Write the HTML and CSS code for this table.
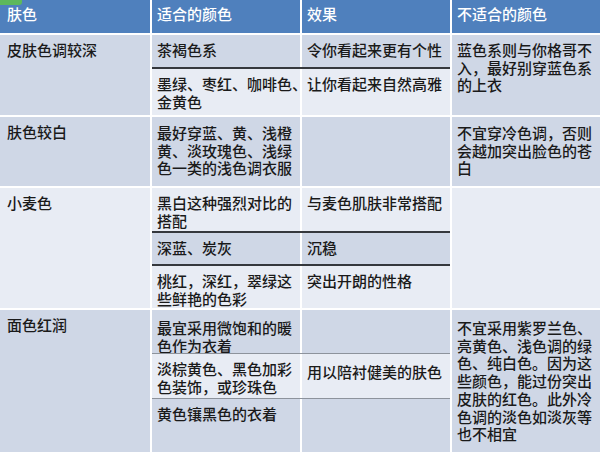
FILE: index.html
```html
<!DOCTYPE html>
<html lang="zh-CN">
<head>
<meta charset="utf-8">
<title>肤色与服装颜色搭配</title>
<link rel="stylesheet" href="styles.css">
</head>
<body>
<div class="page">
  <div class="badge"></div>
  <div class="table">
    <div class="row head">
      <div class="cell">肤色</div>
      <div class="cell">适合的颜色</div>
      <div class="cell">效果</div>
      <div class="cell">不适合的颜色</div>
    </div>

    <div class="row row1">
      <div class="cell c1 dark">皮肤色调较深</div>
      <div class="cell k2 r1 dark">茶褐色系</div>
      <div class="cell k3 r1 dark">令你看起来更有个性</div>
      <div class="line l2 darkline"></div>
      <div class="cell k2 r3 light">墨绿、枣红、咖啡色、<br>金黄色</div>
      <div class="cell k3 r3 light">让你看起来自然高雅</div>
      <div class="cell c4 dark">蓝色系则与你格哥不<br>入，最好别穿蓝色系<br>的上衣</div>
    </div>

    <div class="row row2">
      <div class="cell c1 dark">肤色较白</div>
      <div class="cell k2 r1 dark pt8">最好穿蓝、黄、浅橙<br>黄、淡玫瑰色、浅绿<br>色一类的浅色调衣服</div>
      <div class="cell k3 r1 dark"></div>
      <div class="cell c4 dark pt8">不宜穿冷色调，否则<br>会越加突出脸色的苍<br>白</div>
    </div>

    <div class="row row3">
      <div class="cell c1 light">小麦色</div>
      <div class="cell k2 r1 light">黑白这种强烈对比的<br>搭配</div>
      <div class="cell k3 r1 light">与麦色肌肤非常搭配</div>
      <div class="line l2 darkline"></div>
      <div class="cell k2 r3 dark">深蓝、炭灰</div>
      <div class="cell k3 r3 dark">沉稳</div>
      <div class="line l4 darkline"></div>
      <div class="cell k2 r5 light">桃红，深红，翠绿这<br>些鲜艳的色彩</div>
      <div class="cell k3 r5 light">突出开朗的性格</div>
      <div class="cell c4 light"></div>
    </div>

    <div class="row row4">
      <div class="cell c1 dark">面色红润</div>
      <div class="cell k2 r1 dark pt9">最宜采用微饱和的暖<br>色作为衣着</div>
      <div class="cell k3 r1 dark"></div>
      <div class="line l2 greyline"></div>
      <div class="cell k2 r3 light">淡棕黄色、黑色加彩<br>色装饰，或珍珠色</div>
      <div class="cell k3 r3 light pt9">用以陪衬健美的肤色</div>
      <div class="line l4 greyline"></div>
      <div class="cell k2 r5 dark">黄色镶黑色的衣着</div>
      <div class="cell k3 r5 dark"></div>
      <div class="cell c4 dark pt9">不宜采用紫罗兰色、<br>亮黄色、浅色调的绿<br>色、纯白色。因为这<br>些颜色，能过份突出<br>皮肤的红色。此外冷<br>色调的淡色如淡灰等<br>也不相宜</div>
    </div>
  </div>
</div>
</body>
</html>
```

FILE: styles.css
```css
html, body {
  margin: 0;
  padding: 0;
  background: #ffffff;
}

.page {
  position: relative;
  width: 600px;
  height: 452px;
  overflow: hidden;
  font-family: "Noto Sans CJK SC", "Noto Sans", "Liberation Sans", sans-serif;
  font-size: 15px;
  font-weight: 500;
  line-height: 17.7px;
  color: #1a1a1a;
}

.badge {
  position: absolute;
  left: 0;
  top: 0;
  width: 22px;
  height: 5px;
  background: #5db85c;
  border-radius: 0 0 3px 0;
}

.table {
  display: flex;
  flex-direction: column;
  row-gap: 2px;
  background: #ffffff;
}

.row {
  display: grid;
  grid-template-columns: 150px 148px 148px 148px;
  column-gap: 2px;
}

.head {
  grid-template-rows: 33px;
}

.head .cell {
  background: #4f80bd;
  color: #ffffff;
  padding: 5px 5px 0 5px;
}

.head .cell:first-child {
  padding-left: 7px;
}

.row1 { grid-template-rows: 32px 2px 46px; }
.row2 { grid-template-rows: 69px; }
.row3 { grid-template-rows: 43px 2px 31px 2px 42px; }
.row4 { grid-template-rows: 43px 1px 44px 1px 53px; }

.cell {
  padding: 6px 5px 0 5px;
  white-space: nowrap;
}

.c1 {
  grid-column: 1;
  grid-row: 1 / -1;
  padding-left: 7px;
}

.c4 {
  grid-column: 4;
  grid-row: 1 / -1;
}

.k2 { grid-column: 2; }
.k3 { grid-column: 3; }
.r1 { grid-row: 1; }
.r3 { grid-row: 3; }
.r5 { grid-row: 5; }

.line { grid-column: 2 / 4; }
.l2 { grid-row: 2; }
.l4 { grid-row: 4; }

.darkline { background: #35383d; }
.greyline { background: #8d939c; }

.dark { background: #cfd7e6; }
.light { background: #e8ecf4; }

.pt8 { padding-top: 7px; }
.pt9 { padding-top: 9px; }
```
